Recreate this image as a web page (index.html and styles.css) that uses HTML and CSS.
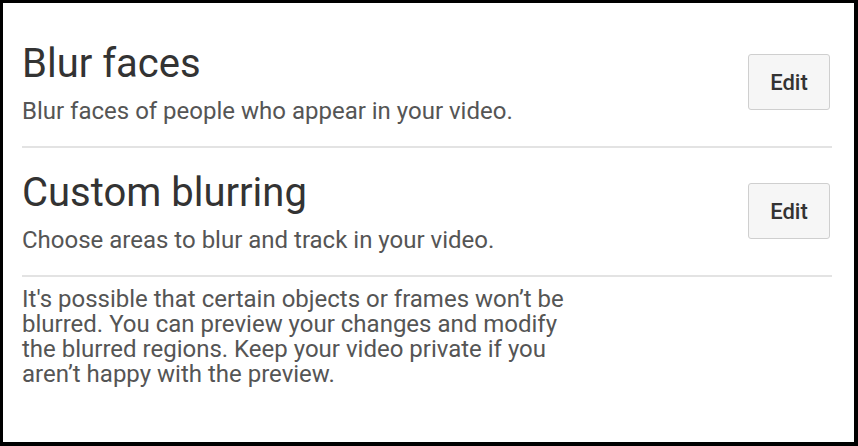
FILE: index.html
```html
<!DOCTYPE html>
<html lang="en">
<head>
    <meta charset="UTF-8">
    <meta name="viewport" content="width=device-width, initial-scale=1.0">
    <link rel="stylesheet" href="styles.css">
    <title>Blurring effects</title>
</head>
<body>
    <div class="frame">
        <div class="option">
            <div class="option-text">
                <h2>Blur faces</h2>
                <p>Blur faces of people who appear in your video.</p>
            </div>
            <button class="edit-button">Edit</button>
        </div>
        <div class="option">
            <div class="option-text">
                <h2>Custom blurring</h2>
                <p>Choose areas to blur and track in your video.</p>
            </div>
            <button class="edit-button">Edit</button>
        </div>
        <p class="note">It's possible that certain objects or frames won’t be blurred. You can preview your changes and modify the blurred regions. Keep your video private if you aren’t happy with the preview.</p>
    </div>
</body>
</html>
```

FILE: styles.css
```css
body {
    margin: 0;
    padding: 0;
    background-color: #fff;
    font-family: Roboto, "Liberation Sans", Arial, sans-serif;
}

.frame {
    box-sizing: border-box;
    width: 858px;
    height: 446px;
    border-style: solid;
    border-color: #000;
    border-width: 3px 4px 4px 3px;
    padding: 16px 22px 0 19px;
    background-color: #fff;
}

.option {
    display: flex;
    align-items: center;
    justify-content: space-between;
    padding: 21px 0 22px 0;
    border-bottom: 2px solid #e3e3e3;
}

.option h2 {
    margin: 0;
    font-size: 40px;
    line-height: 48px;
    font-weight: 400;
    color: #333;
}

.option p {
    margin: 11px 0 0 0;
    font-size: 24px;
    line-height: 25px;
    color: #555;
}

.edit-button {
    box-sizing: border-box;
    width: 82px;
    height: 56px;
    margin-right: 2px;
    font-family: inherit;
    font-size: 22px;
    font-weight: 500;
    color: #333;
    background-color: #f6f6f6;
    border: 1px solid #cfcfcf;
    border-radius: 3px;
    cursor: pointer;
}

.note {
    width: 556px;
    margin: 10px 0 0 0;
    font-size: 24px;
    line-height: 25px;
    color: #555;
}
```
